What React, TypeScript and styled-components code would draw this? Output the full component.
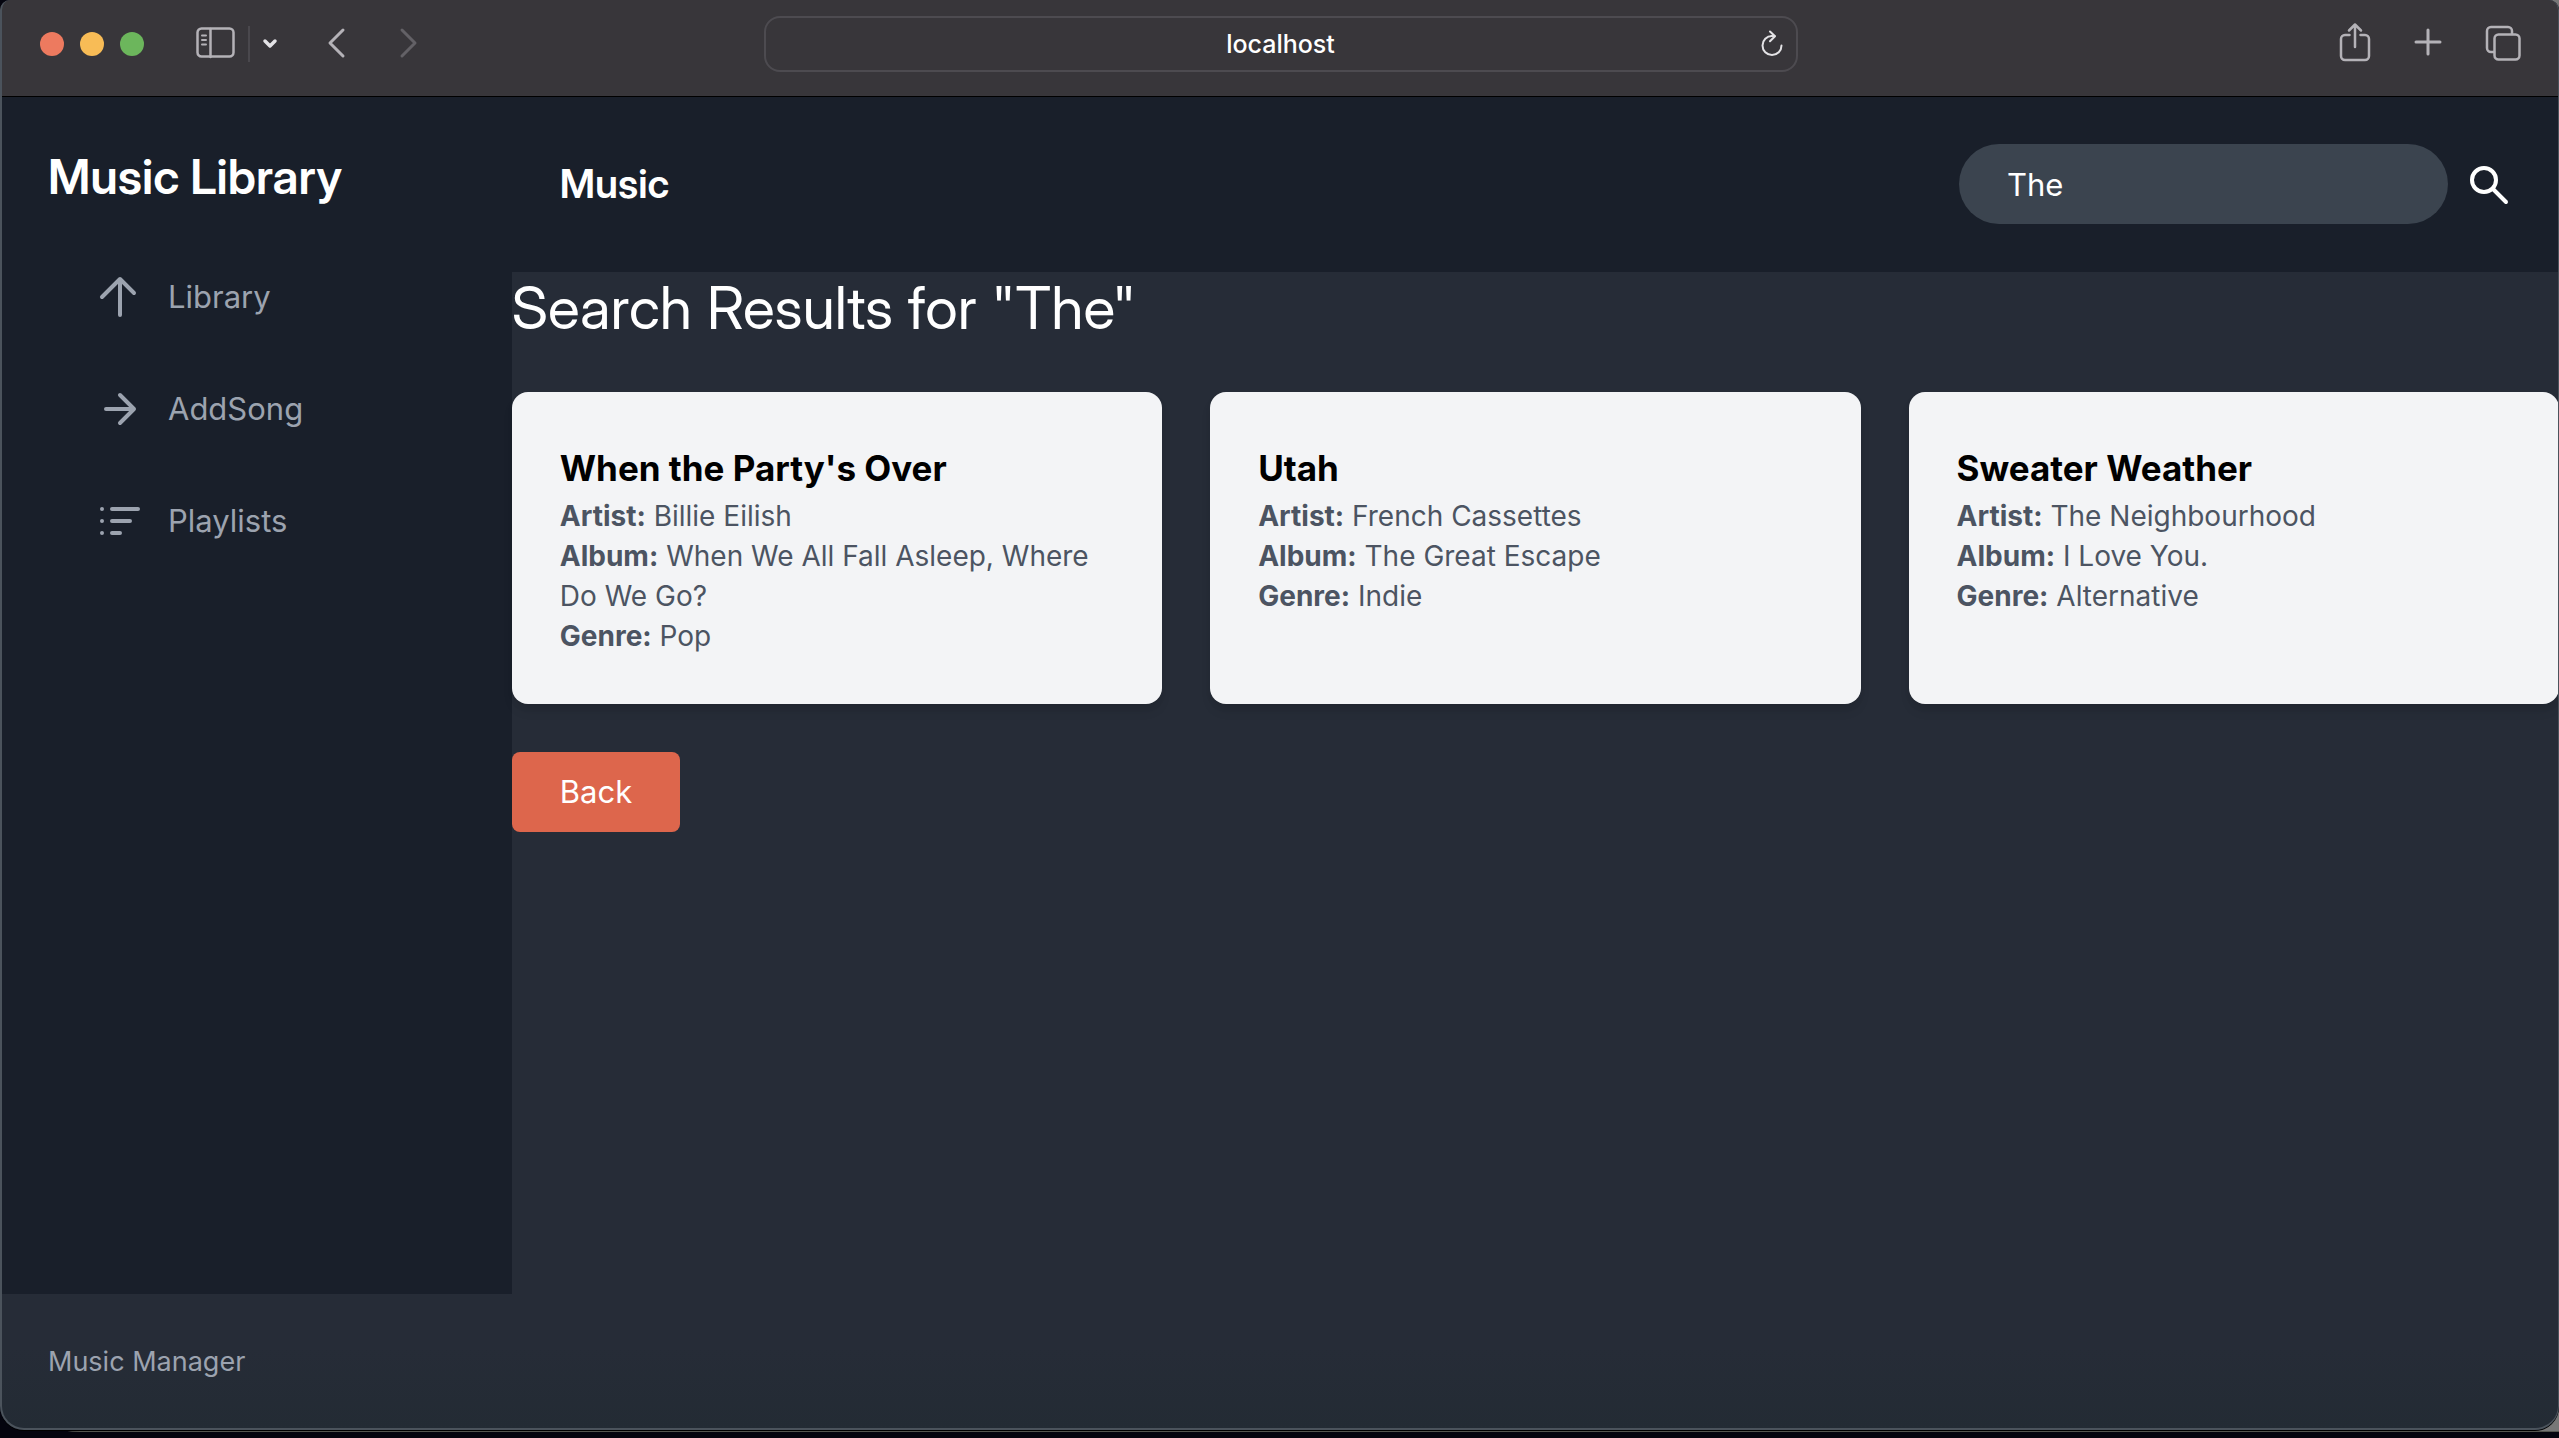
import React, { useState } from "react";
import styled, { createGlobalStyle } from "styled-components";

const color = {
  chrome: "#38363a",
  edge: "#4b535c",
  panel: "#191f2a",
  page: "#262c37",
  field: "#3b444f",
  muted: "#9ca3af",
  card: "#f3f4f6",
  detail: "#4c5462",
  accent: "#dd664c",
  icon: "#b4b2b7",
};

const GlobalStyle = createGlobalStyle`
  *, *::before, *::after { box-sizing: border-box; }
  body {
    margin: 0;
    background: #04040e;
    font-family: Inter, "Liberation Sans", sans-serif;
    font-size: 31px;
    line-height: 48px;
    color: #fff;
  }
  h1, h2, h3, p, ul { margin: 0; padding: 0; font: inherit; }
  ul { list-style: none; }
  button, input { font: inherit; color: inherit; border: 0; background: none; padding: 0; margin: 0; }
  button { cursor: pointer; }
  svg { display: block; fill: none; stroke: currentColor; stroke-linecap: round; stroke-linejoin: round; }
`;

const displayFont = `"Inter Display", Inter, "Liberation Sans", sans-serif`;

const Desktop = styled.div`
  min-height: 100vh;
  padding-bottom: 6px;
  display: flex;
  flex-direction: column;
`;

const Backdrop = styled.div`
  flex: 1;
  display: flex;
  border-bottom: 1px solid #55564f;
  border-radius: 0 0 0 80px;
  background: linear-gradient(90deg, #05050f 98%, #777 99%);
  padding-bottom: 1px;
`;

/* The hairline edge is painted over the content, so panels run to the window's sides. */
const Window = styled.div`
  position: relative;
  flex: 1;
  display: flex;
  flex-direction: column;
  overflow: hidden;
  border-radius: 10px 10px 24px 24px;
  background: ${color.page};
  box-shadow: 0 1px 0 #000;

  &::after {
    content: "";
    position: absolute;
    inset: 0;
    border: solid ${color.edge};
    border-width: 0 1px 2px 2px;
    border-radius: inherit;
    pointer-events: none;
  }
`;

const Toolbar = styled.header`
  display: grid;
  grid-template-columns: 1fr minmax(0, 1034px) 1fr;
  align-items: center;
  height: 97px;
  padding: 0 38px 8px 40px;
  background: ${color.chrome};
  border-bottom: 1px solid #000;
  color: ${color.icon};
`;

const ToolGroup = styled.div<{ $end?: boolean }>`
  display: flex;
  align-items: center;
  justify-content: ${(p) => (p.$end ? "flex-end" : "flex-start")};
  gap: ${(p) => (p.$end ? "41px" : "0")};
`;

const Lights = styled.div`
  display: flex;
  gap: 16px;
  margin-right: 52px;
`;

const Light = styled.button<{ $fill: string }>`
  width: 24px;
  height: 24px;
  border-radius: 50%;
  background: ${(p) => p.$fill};
`;

const ToolButton = styled.button<{ $dim?: boolean; $bright?: boolean; $after?: number }>`
  display: flex;
  align-items: center;
  color: ${(p) => (p.$dim ? "#636166" : p.$bright ? "#e4e3e6" : "inherit")};
  margin-right: ${(p) => p.$after ?? 0}px;
`;

const Divider = styled.span`
  width: 2px;
  height: 36px;
  margin: 0 12px;
  background: #4a484d;
`;

const AddressBar = styled.div`
  display: grid;
  grid-template-columns: 24px 1fr 24px;
  align-items: center;
  height: 56px;
  padding: 0 12px;
  border: 2px solid #4d4b50;
  border-radius: 16px;
`;

const AddressInput = styled.input`
  grid-column: 2;
  width: 100%;
  text-align: center;
  font-size: 25px;
  line-height: 32px;
  font-weight: 500;
  color: #fff;
  outline: 0;
`;

const Shell = styled.div`
  flex: 1;
  display: grid;
  grid-template-columns: 20% 1fr;
`;

const Sidebar = styled.aside`
  padding: 48px;
  background: ${color.panel};
`;

const Brand = styled.h1`
  font-family: ${displayFont};
  font-size: 48px;
  line-height: 64px;
  font-weight: 600;
  margin-bottom: 32px;
`;

const NavLink = styled.a`
  display: flex;
  align-items: center;
  gap: 24px;
  padding: 32px 48px;
  color: ${color.muted};
  text-decoration: none;
`;

const Main = styled.main`
  min-width: 0;
`;

const TopBar = styled.div`
  display: flex;
  align-items: center;
  justify-content: space-between;
  padding: 47px 47px 48px 48px;
  background: ${color.panel};
`;

const TopTitle = styled.h2`
  font-family: ${displayFont};
  font-size: 40px;
  line-height: 56px;
  font-weight: 600;
`;

const SearchForm = styled.form`
  display: flex;
  align-items: center;
  gap: 16px;
`;

const SearchInput = styled.input`
  width: 489px;
  height: 80px;
  padding: 0 48px;
  border-radius: 40px;
  background: ${color.field};
  outline: 0;
`;

const Results = styled.section`
  display: flex;
  flex-direction: column;
  align-items: stretch;
`;

const ResultsTitle = styled.h2`
  font-family: ${displayFont};
  font-size: 59px;
  line-height: 72px;
  margin-bottom: 48px;
`;

const Cards = styled.ul`
  display: grid;
  grid-template-columns: repeat(3, minmax(0, 1fr));
  gap: 48px;
`;

const Card = styled.li`
  padding: 48px;
  border-radius: 16px;
  background: ${color.card};
  box-shadow: 0 8px 12px -2px rgba(0, 0, 0, 0.1), 0 4px 8px -2px rgba(0, 0, 0, 0.06);
`;

const SongTitle = styled.h3`
  font-size: 35px;
  line-height: 56px;
  font-weight: 700;
  color: #000;
`;

const Detail = styled.p`
  font-size: 28px;
  line-height: 40px;
  color: ${color.detail};

  strong { font-weight: 700; }
`;

const BackButton = styled.button`
  align-self: flex-start;
  margin-top: 48px;
  padding: 16px 48px;
  border-radius: 8px;
  background: ${color.accent};
`;

const Footer = styled.footer`
  padding: 48px;
  background: linear-gradient(${color.page} 40%, #232b34 100%);
  font-size: 27px;
  line-height: 40px;
  color: ${color.muted};
`;

const SidebarIcon = () => (
  <svg width="40" height="34" viewBox="0 0 40 34" strokeWidth="2.5">
    <rect x="1.500" y="1.500" width="36" height="28" rx="4" />
    <path d="M14.500 2v28" />
    <path d="M6 8.500h4M6 13h4M6 17.500h4" strokeWidth="2" />
  </svg>
);
const ChevronDown = () => (
  <svg width="16" height="12" viewBox="0 0 16 12" strokeWidth="3.500"><path d="M3 3l5 5 5-5" /></svg>
);
const ChevronSide = ({ forward }: { forward?: boolean }) => (
  <svg width="20" height="34" viewBox="0 0 20 34" strokeWidth="3">
    <path d={forward ? "M4 3l13 13L4 29" : "M17 3L4 16l13 13"} />
  </svg>
);
const ReloadIcon = () => (
  <svg width="24" height="28" viewBox="0 0 24 28" strokeWidth="2">
    <path d="M12 6a9.500 9.500 0 1 0 9.500 9.500M10 1.500l5 4.800-5 5M11 6h4" />
  </svg>
);
const ShareIcon = () => (
  <svg width="32" height="44" viewBox="0 0 32 44" strokeWidth="2.500">
    <path d="M10.500 13H6a4 4 0 0 0-4 4v17a4 4 0 0 0 4 4h20a4 4 0 0 0 4-4V17a4 4 0 0 0-4-4h-4.500M16 25V3M10 8.500L16 2.500l6 6" />
  </svg>
);
const PlusIcon = () => (
  <svg width="32" height="34" viewBox="0 0 32 34" strokeWidth="3"><path d="M16 3v24M4 15h24" /></svg>
);
const TabsIcon = () => (
  <svg width="36" height="38" viewBox="0 0 36 38" strokeWidth="2.500">
    <rect x="9.500" y="9.500" width="25" height="25" rx="4" />
    <path d="M9 27H6a4 4 0 0 1-4-4V6a4 4 0 0 1 4-4h17a4 4 0 0 1 4 4v3" />
  </svg>
);
const SearchIcon = () => (
  <svg width="48" height="48" viewBox="0 0 48 48" strokeWidth="4">
    <circle cx="20" cy="20" r="12" /><path d="M29 29l13 13" />
  </svg>
);
const UpIcon = () => (
  <svg width="48" height="48" viewBox="0 0 48 48" strokeWidth="4"><path d="M24 6v36M24 6L6 24M24 6l14 14" /></svg>
);
const RightIcon = () => (
  <svg width="48" height="48" viewBox="0 0 48 48" strokeWidth="4"><path d="M10 24h28M24 10l14 14-14 14" /></svg>
);
const ListIcon = () => (
  <svg width="48" height="48" viewBox="0 0 48 48" strokeWidth="4">
    <path d="M6 12h0M6 24h0M6 36h0M16 12h26M16 24h18M16 36h8" />
  </svg>
);

const links = [
  { label: "Library", Icon: UpIcon },
  { label: "AddSong", Icon: RightIcon },
  { label: "Playlists", Icon: ListIcon },
];

const songs = [
  { title: "When the Party's Over", artist: "Billie Eilish", album: "When We All Fall Asleep, Where Do We Go?", genre: "Pop" },
  { title: "Utah", artist: "French Cassettes", album: "The Great Escape", genre: "Indie" },
  { title: "Sweater Weather", artist: "The Neighbourhood", album: "I Love You.", genre: "Alternative" },
];

const BrowserToolbar = () => (
  <Toolbar>
    <ToolGroup>
      <Lights>
        <Light type="button" $fill="#ed7a5f" aria-label="Close" />
        <Light type="button" $fill="#f8bc56" aria-label="Minimize" />
        <Light type="button" $fill="#6cb65c" aria-label="Zoom" />
      </Lights>
      <ToolButton type="button" aria-label="Show sidebar"><SidebarIcon /></ToolButton>
      <Divider />
      <ToolButton type="button" $bright $after={48} aria-label="Tab groups"><ChevronDown /></ToolButton>
      <ToolButton type="button" $after={52} aria-label="Go back"><ChevronSide /></ToolButton>
      <ToolButton type="button" $dim aria-label="Go forward"><ChevronSide forward /></ToolButton>
    </ToolGroup>
    <AddressBar>
      <AddressInput aria-label="Address" defaultValue="localhost" />
      <ToolButton type="button" $bright aria-label="Reload"><ReloadIcon /></ToolButton>
    </AddressBar>
    <ToolGroup $end>
      <ToolButton type="button" aria-label="Share"><ShareIcon /></ToolButton>
      <ToolButton type="button" aria-label="New tab"><PlusIcon /></ToolButton>
      <ToolButton type="button" aria-label="Tab overview"><TabsIcon /></ToolButton>
    </ToolGroup>
  </Toolbar>
);

export default function App() {
  const [query, setQuery] = useState("The");

  return (
    <>
      <GlobalStyle />
      <Desktop>
        <Backdrop>
          <Window>
            <BrowserToolbar />
            <Shell>
              <Sidebar>
                <Brand>Music Library</Brand>
                <nav>
                  {links.map(({ label, Icon }) => (
                    <NavLink key={label} href="#"><Icon />{label}</NavLink>
                  ))}
                </nav>
              </Sidebar>
              <Main>
                <TopBar>
                  <TopTitle>Music</TopTitle>
                  <SearchForm onSubmit={(e) => e.preventDefault()}>
                    <SearchInput aria-label="Search" value={query} onChange={(e) => setQuery(e.target.value)} />
                    <ToolButton type="submit" aria-label="Search"><SearchIcon /></ToolButton>
                  </SearchForm>
                </TopBar>
                <Results>
                  <ResultsTitle>{`Search Results for "${query}"`}</ResultsTitle>
                  <Cards>
                    {songs.map((song) => (
                      <Card key={song.title}>
                        <SongTitle>{song.title}</SongTitle>
                        <Detail><strong>Artist:</strong> {song.artist}</Detail>
                        <Detail><strong>Album:</strong> {song.album}</Detail>
                        <Detail><strong>Genre:</strong> {song.genre}</Detail>
                      </Card>
                    ))}
                  </Cards>
                  <BackButton type="button">Back</BackButton>
                </Results>
              </Main>
            </Shell>
            <Footer>Music Manager</Footer>
          </Window>
        </Backdrop>
      </Desktop>
    </>
  );
}
